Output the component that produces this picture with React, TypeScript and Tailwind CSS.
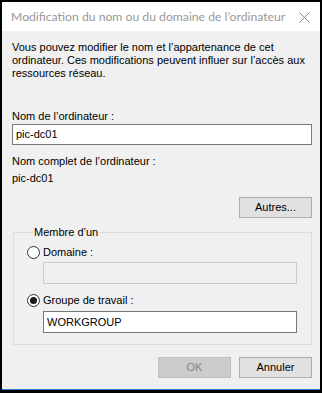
import React from "react";

const body = { fontFamily: '"Liberation Sans", Arial, sans-serif' };

const Radio = ({ checked, label }: { checked?: boolean; label: string }) => (
  <div className="flex items-center h-[13px]">
    <span className="w-[13px] h-[13px] rounded-full border border-[#333] bg-white flex items-center justify-center">
      {checked && <span className="w-[7px] h-[7px] rounded-full bg-[#1a1a1a]" />}
    </span>
    <span className="ml-[3px]">{label}</span>
  </div>
);

const Button = ({ label, disabled }: { label: string; disabled?: boolean }) => (
  <button
    className={
      disabled
        ? "w-[73px] h-[21px] border border-[#bfbfbf] bg-[#cccccc] text-[#838383] leading-[13px]"
        : "w-[73px] h-[21px] border border-[#adadad] bg-[#e1e1e1] text-black leading-[13px]"
    }
  >
    {label}
  </button>
);

export default function App() {
  return (
    <div className="w-[322px] h-[393px] bg-black px-[2px] pt-[2px] pb-[3px] flex flex-col">
      <div className="h-[29px] bg-white flex items-center justify-between pl-[9px] pr-[10px] shrink-0">
        <span
          className="text-[12.2px] text-[#999] whitespace-nowrap pt-[1px]"
          style={{ fontFamily: 'Lato, "Noto Sans", sans-serif' }}
        >
          Modification du nom ou du domaine de l’ordinateur
        </span>
        <svg width="11" height="11" viewBox="0 0 11 11" className="mt-[1px] shrink-0">
          <path d="M0.5 0.5 L10.5 10.5 M10.5 0.5 L0.5 10.5" stroke="#8a8a8a" strokeWidth="1" />
        </svg>
      </div>
      <div
        className="flex-1 bg-[#f0f0f0] pl-[10px] pr-[8px] pt-[10px] text-[11px] leading-[13px] text-black flex flex-col"
        style={body}
      >
        <p>
          Vous pouvez modifier le nom et l’appartenance de cet ordinateur. Ces modifications peuvent influer sur
          l’accès aux ressources réseau.
        </p>
        <div className="mt-[30px]">Nom de l’ordinateur :</div>
        <div className="mt-[1px] h-[21px] border border-[#7a7a7a] bg-white px-[3px] flex items-center">pic-dc01</div>
        <div className="mt-[10px]">Nom complet de l’ordinateur :</div>
        <div className="mt-[4px]">pic-dc01</div>
        <div className="mt-[12px] flex justify-end">
          <Button label="Autres..." />
        </div>
        <fieldset className="mt-[8px] ml-[1px] border border-[#dcdcdc] pl-[13px] pr-[14px] pb-[11px]">
          <legend className="ml-[6px] px-[1px]">Membre d’un</legend>
          <div className="mt-[7px]">
            <Radio label="Domaine :" />
          </div>
          <div className="mt-[3px] ml-[16px] h-[22px] border border-[#cccccc] bg-[#f0f0f0]" />
          <div className="mt-[10px]">
            <Radio checked label="Groupe de travail :" />
          </div>
          <div className="mt-[4px] ml-[16px] h-[22px] border border-[#7a7a7a] bg-white px-[3px] flex items-center">
            WORKGROUP
          </div>
        </fieldset>
        <div className="mt-[12px] flex justify-end gap-[8px]">
          <Button label="OK" disabled />
          <Button label="Annuler" />
        </div>
      </div>
      <div className="h-[1px] bg-[#2b79d0] shrink-0" />
    </div>
  );
}
